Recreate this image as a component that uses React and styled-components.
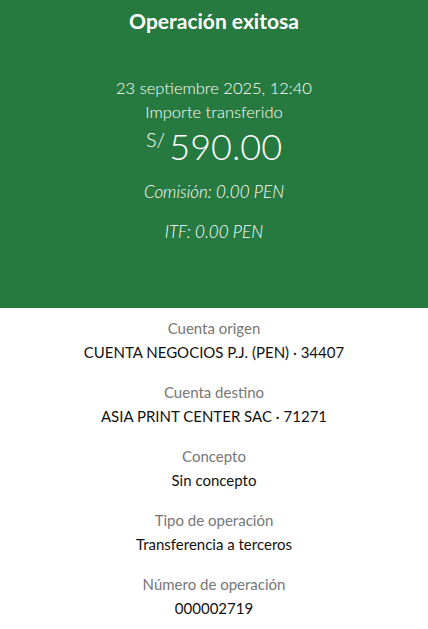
import React from 'react';
import styled, { createGlobalStyle } from 'styled-components';

const GlobalStyle = createGlobalStyle`
	body {
		margin: 0;
		background: #ffffff;
		font-family: Lato, "Open Sans", sans-serif;
	}
`;

const Header = styled.section`
	background: #277a3f;
	color: #ffffff;
	height: 308px;
	display: flex;
	flex-direction: column;
	align-items: center;
`;

const Title = styled.h1`
	margin: 9px 0 0;
	font-size: 21px;
	line-height: 24px;
	font-weight: 700;
`;

const DateLine = styled.div`
	margin-top: 43px;
	font-size: 16.5px;
	line-height: 24px;
	font-weight: 300;
`;

const Caption = styled.div`
	font-size: 16.5px;
	line-height: 24px;
	font-weight: 300;
`;

const Amount = styled.div`
	display: flex;
	align-items: flex-start;
	margin-top: 1px;
	font-weight: 300;
`;

const Currency = styled.span`
	font-size: 20px;
	line-height: 26px;
	margin-top: 1px;
	margin-right: 4px;
`;

const Value = styled.span`
	font-size: 36px;
	line-height: 42px;
`;

const Fee = styled.div`
	margin-top: ${props => props.gap}px;
	font-size: 17px;
	line-height: 24px;
	font-style: italic;
	font-weight: 300;
`;

const Details = styled.section`
	display: flex;
	flex-direction: column;
	align-items: center;
	padding-top: 8px;
	gap: 16px;
`;

const Item = styled.div`
	display: flex;
	flex-direction: column;
	align-items: center;
`;

const Label = styled.div`
	color: #767676;
	font-size: 15px;
	line-height: 24px;
	font-weight: 400;
`;

const Text = styled.div`
	color: #121212;
	font-size: 15px;
	line-height: 24px;
	font-weight: 400;
`;

const rows = [
	['Cuenta origen', 'CUENTA NEGOCIOS P.J. (PEN) · 34407'],
	['Cuenta destino', 'ASIA PRINT CENTER SAC · 71271'],
	['Concepto', 'Sin concepto'],
	['Tipo de operación', 'Transferencia a terceros'],
	['Número de operación', '000002719'],
];

export default function App() {
	return (
		<>
			<GlobalStyle />
			<Header>
				<Title>Operación exitosa</Title>
				<DateLine>23 septiembre 2025, 12:40</DateLine>
				<Caption>Importe transferido</Caption>
				<Amount>
					<Currency>S/</Currency>
					<Value>590.00</Value>
				</Amount>
				<Fee gap={13}>Comisión: 0.00 PEN</Fee>
				<Fee gap={16}>ITF: 0.00 PEN</Fee>
			</Header>
			<Details>
				{rows.map(([label, text]) => (
					<Item key={label}>
						<Label>{label}</Label>
						<Text>{text}</Text>
					</Item>
				))}
			</Details>
		</>
	);
}
